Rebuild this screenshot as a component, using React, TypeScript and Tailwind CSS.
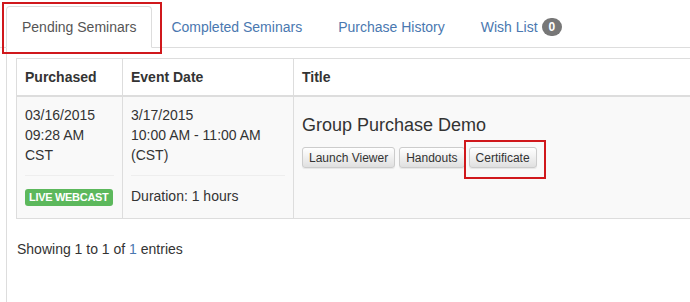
import React from 'react';

const tabs = [
  { label: 'Pending Seminars', active: true },
  { label: 'Completed Seminars' },
  { label: 'Purchase History' },
  { label: 'Wish List', badge: 0 },
];

const Btn: React.FC<{ children: React.ReactNode }> = ({ children }) => (
  <button className="h-[21px] px-[6px] text-[12px] leading-[18px] text-[#333] border border-[#ccc] rounded-[3px] bg-gradient-to-b from-white to-[#e0e0e0] shadow-[inset_0_1px_0_rgba(255,255,255,0.15),0_1px_1px_rgba(0,0,0,0.075)]">
    {children}
  </button>
);

export default function App() {
  return (
    <div className="relative w-[690px] h-[302px] overflow-hidden bg-white text-[14px] leading-[20px] text-[#333] font-['Liberation_Sans',Arial,sans-serif]">
      <ul className="flex pt-[6px] pl-[6px] border-b border-[#ddd]">
        {tabs.map((t) => (
          <li key={t.label} className="mr-[2px] -mb-px">
            <div
              className={`flex items-center py-[10px] border rounded-t-[4px] ${
                t.active
                  ? 'px-[15px] bg-white border-[#ddd] border-b-transparent text-[#555]'
                  : 'px-[16px] border-transparent text-[#4a78b0]'
              }`}
            >
              {t.label}
              {t.badge !== undefined && (
                <span className="ml-[4px] inline-flex items-center justify-center h-[18px] px-[7px] rounded-full bg-[#777] text-white text-[12px] font-bold leading-none">
                  {t.badge}
                </span>
              )}
            </div>
          </li>
        ))}
      </ul>

      <div className="ml-[6px] border-l border-[#ddd] pl-[9px] pt-[10px] h-[260px]">
        <table className="w-[700px] border-collapse border border-[#ddd] text-left">
          <thead>
            <tr>
              <th className="w-[106px] px-[8px] py-[8px] border border-[#ddd] border-b-2 font-bold">Purchased</th>
              <th className="w-[171px] px-[8px] py-[8px] border border-[#ddd] border-b-2 font-bold">Event Date</th>
              <th className="px-[8px] py-[8px] border border-[#ddd] border-b-2 font-bold">Title</th>
            </tr>
          </thead>
          <tbody>
            <tr className="bg-[#f9f9f9]">
              <td className="align-top px-[8px] pt-[8px] pb-[12px] border border-[#ddd]">
                <div>03/16/2015</div>
                <div>09:28 AM</div>
                <div>CST</div>
                <hr className="my-[10px] border-t border-[#eee]" />
                <span className="inline-block whitespace-nowrap px-[4px] pt-[2px] pb-[2px] rounded-[3px] bg-[#5cb85c] text-white text-[11px] leading-[13px] font-bold tracking-[-0.3px]">
                  LIVE WEBCAST
                </span>
              </td>
              <td className="align-top px-[8px] pt-[8px] pb-[12px] border border-[#ddd]">
                <div>3/17/2015</div>
                <div>10:00 AM - 11:00 AM</div>
                <div>(CST)</div>
                <hr className="my-[10px] border-t border-[#eee]" />
                <div>Duration: 1 hours</div>
              </td>
              <td className="align-top px-[8px] pt-[8px] pb-[12px] border border-[#ddd]">
                <div className="mt-[10px] mb-[12px] text-[18px] leading-[20px]">Group Purchase Demo</div>
                <div className="flex gap-[4px]">
                  <Btn>Launch Viewer</Btn>
                  <Btn>Handouts</Btn>
                  <Btn>Certificate</Btn>
                </div>
              </td>
            </tr>
          </tbody>
        </table>
        <div className="mt-[20px] pl-[1px]">
          Showing 1 to 1 of <span className="text-[#4a78b0]">1</span> entries
        </div>
      </div>

      <div className="absolute left-[2px] top-[2px] w-[160px] h-[52px] border-2 border-[#d0181c]" />
      <div className="absolute left-[464px] top-[140px] w-[82px] h-[39px] border-2 border-[#d0181c]" />
    </div>
  );
}
